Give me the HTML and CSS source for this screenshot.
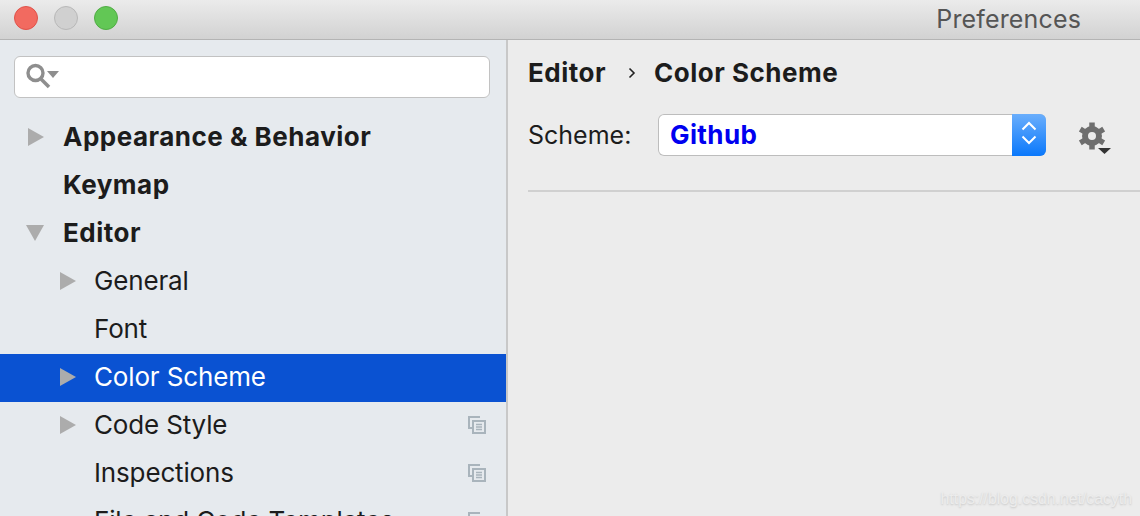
FILE: index.html
```html
<!DOCTYPE html>
<html lang="en">
<head>
<meta charset="UTF-8" />
<title>Preferences</title>
<link rel="stylesheet" href="styles.css">
</head>
<body>
  <div class="window">
    <header class="titlebar">
      <div class="lights">
        <span class="light light-close"></span>
        <span class="light light-min"></span>
        <span class="light light-max"></span>
      </div>
      <div class="title">Preferences</div>
    </header>

    <div class="content">
      <aside class="sidebar">
        <div class="search">
          <svg class="search-icon" width="34" height="30" viewBox="0 0 34 30">
            <circle cx="10.5" cy="11" r="7.5" fill="none" stroke="#8e8e8e" stroke-width="3.4"/>
            <path d="M16 17l8 8" stroke="#8e8e8e" stroke-width="3.6" fill="none"/>
            <path d="M22 9h12l-6 7z" fill="#8e8e8e"/>
          </svg>
        </div>

        <ul class="tree">
          <li class="row row-top"><span class="arrow"></span>Appearance &amp; Behavior</li>
          <li class="row row-top"><span class="arrow arrow-none"></span>Keymap</li>
          <li class="row row-top"><span class="arrow arrow-open"></span>Editor</li>
          <li class="row row-sub"><span class="arrow"></span>General</li>
          <li class="row row-sub"><span class="arrow arrow-none"></span>Font</li>
          <li class="row row-sub row-selected"><span class="arrow"></span>Color Scheme</li>
          <li class="row row-sub"><span class="arrow"></span>Code Style
            <svg class="copy-icon" width="18" height="18" viewBox="0 0 18 18"><use href="#copy"/></svg>
          </li>
          <li class="row row-sub"><span class="arrow arrow-none"></span>Inspections
            <svg class="copy-icon" width="18" height="18" viewBox="0 0 18 18"><use href="#copy"/></svg>
          </li>
          <li class="row row-sub"><span class="arrow arrow-none"></span>File and Code Templates
            <svg class="copy-icon" width="18" height="18" viewBox="0 0 18 18"><use href="#copy"/></svg>
          </li>
        </ul>
      </aside>

      <main class="panel">
        <div class="crumbs">
          <span>Editor</span>
          <svg class="crumb-sep" width="8" height="12" viewBox="0 0 8 12">
            <path d="M1.500 1.500L6 6l-4.500 4.500" fill="none" stroke="#222" stroke-width="1.600"/>
          </svg>
          <span>Color Scheme</span>
        </div>

        <div class="scheme-row">
          <label class="scheme-label">Scheme:</label>
          <div class="select">
            <span class="select-value">Github</span>
            <span class="select-btn">
              <svg width="16" height="30" viewBox="0 0 16 30">
                <path d="M1.500 9.500L8 3l6.500 6.500M1.500 16.500L8 23l6.500-6.500" fill="none" stroke="#fff" stroke-width="2"/>
              </svg>
            </span>
          </div>
          <svg class="gear" width="34" height="34" viewBox="0 0 34 34">
            <g transform="translate(14 14)">
              <circle r="7" fill="none" stroke="#6e6e6e" stroke-width="6"/>
              <g stroke="#6e6e6e" stroke-width="5.500">
                <path d="M0-13.500V-8M0 13.500V8M-11.700-6.800L-7-4M11.700 6.800L7 4M-11.700 6.800L-7 4M11.700-6.800L7-4"/>
              </g>
            </g>
            <path d="M20 26h13l-6.500 6z" fill="#333"/>
          </svg>
        </div>

        <div class="divider"></div>
      </main>
    </div>

    <div class="watermark">https://blog.csdn.net/cacyth</div>
  </div>

  <svg width="0" height="0" class="defs">
    <symbol id="copy" viewBox="0 0 18 18">
      <path d="M12 1H1v11h3" fill="none" stroke="#a9b4bc" stroke-width="2"/>
      <path d="M5 5h12v12H5z" fill="none" stroke="#a9b4bc" stroke-width="2"/>
      <path d="M8 8.500h6M8 11h6M8 13.500h6" stroke="#a9b4bc" stroke-width="1.600"/>
    </symbol>
  </svg>
</body>
</html>
```

FILE: styles.css
```css
html, body {
  margin: 0;
  padding: 0;
  height: 100%;
  overflow: hidden;
}
body {
  font-family: Inter, "Noto Sans", sans-serif;
  color: #1c1c1c;
}
.window {
  position: relative;
  width: 1140px;
  height: 516px;
  overflow: hidden;
  display: flex;
  flex-direction: column;
  background: #ececec;
}
.defs {
  position: absolute;
}

/* title bar */
.titlebar {
  height: 39px;
  flex-shrink: 0;
  display: flex;
  align-items: center;
  justify-content: space-between;
  padding: 0 59px 0 14px;
  background: linear-gradient(#ebebeb, #d2d2d2);
  border-bottom: 1px solid #b4b4b4;
}
.lights {
  display: flex;
  gap: 16px;
  margin-top: -3px;
}
.light {
  width: 24px;
  height: 24px;
  border-radius: 50%;
  box-sizing: border-box;
  border: 1px solid;
}
.light-close {
  background: #f26a60;
  border-color: #e0524a;
}
.light-min {
  background: #d0d0d0;
  border-color: #b8b8b8;
}
.light-max {
  background: #62c755;
  border-color: #50ac44;
}
.title {
  font-size: 25px;
  letter-spacing: 0.15px;
  color: #555;
  margin-top: -2px;
}

.content {
  flex: 1;
  display: flex;
  min-height: 0;
}

/* left tree */
.sidebar {
  width: 506px;
  flex-shrink: 0;
  background: #e6eaee;
  border-right: 2px solid #c8c8c8;
  padding-top: 16px;
}
.search {
  height: 42px;
  box-sizing: border-box;
  margin: 0 16px 16px 14px;
  padding: 5px 0 0 10px;
  background: #fff;
  border: 1px solid #c2c2c2;
  border-radius: 6px;
}
.search-icon {
  display: block;
}
.tree {
  list-style: none;
  margin: 0;
  padding: 0;
}
.row {
  height: 48px;
  box-sizing: border-box;
  padding-bottom: 4px;
  display: flex;
  align-items: center;
  font-size: 26px;
}
.row-top {
  font-weight: 700;
  letter-spacing: 0.5px;
  padding-left: 28px;
}
.row-top .arrow {
  margin-right: 19px;
}
.row-sub {
  padding-left: 60px;
  padding-right: 20px;
  letter-spacing: -0.15px;
}
.row-selected {
  background: #0a52d2;
  color: #fff;
}
.arrow {
  width: 16px;
  height: 18px;
  margin-top: 2px;
  margin-right: 18px;
  flex-shrink: 0;
  background: #acacac;
  clip-path: polygon(0 0, 100% 50%, 0 100%);
}
.arrow-none {
  background: none;
}
.row-top .arrow-open {
  clip-path: polygon(0 0, 100% 0, 50% 100%);
  width: 18px;
  height: 16px;
  margin-left: -2px;
  margin-right: 19px;
}
.copy-icon {
  margin-left: auto;
  margin-top: 2px;
}

/* right panel */
.panel {
  flex: 1;
  padding: 15px 0 0 20px;
}
.crumbs {
  display: flex;
  align-items: center;
  gap: 20px;
  height: 34px;
  font-size: 26px;
  font-weight: 700;
  letter-spacing: 0.5px;
}
.crumb-sep {
  margin: 1px -2px 0 2px;
}
.scheme-row {
  display: flex;
  align-items: center;
  margin-top: 25px;
}
.scheme-label {
  width: 130px;
  font-size: 25px;
}
.select {
  width: 388px;
  height: 42px;
  display: flex;
  align-items: center;
  justify-content: space-between;
  background: #fff;
  box-shadow: inset 0 0 0 1px #bdbdbd;
  border-radius: 6px;
  overflow: hidden;
}
.select-value {
  padding-left: 12px;
  margin-top: -2px;
  color: #0000f0;
  font-size: 26px;
  font-weight: 700;
  letter-spacing: 0.4px;
}
.select-btn {
  width: 34px;
  height: 42px;
  display: flex;
  align-items: center;
  justify-content: center;
  background: linear-gradient(#6aaefc, #0a78fb);
}
.gear {
  margin-left: 32px;
  margin-top: 7px;
}
.divider {
  height: 2px;
  margin-top: 34px;
  background: #d0d0d0;
}

.watermark {
  position: absolute;
  right: 8px;
  bottom: 8px;
  font-family: "Liberation Sans", sans-serif;
  font-size: 15.8px;
  color: #ececec;
  text-shadow: 0 1px 2px #c4c4c4;
}
```
